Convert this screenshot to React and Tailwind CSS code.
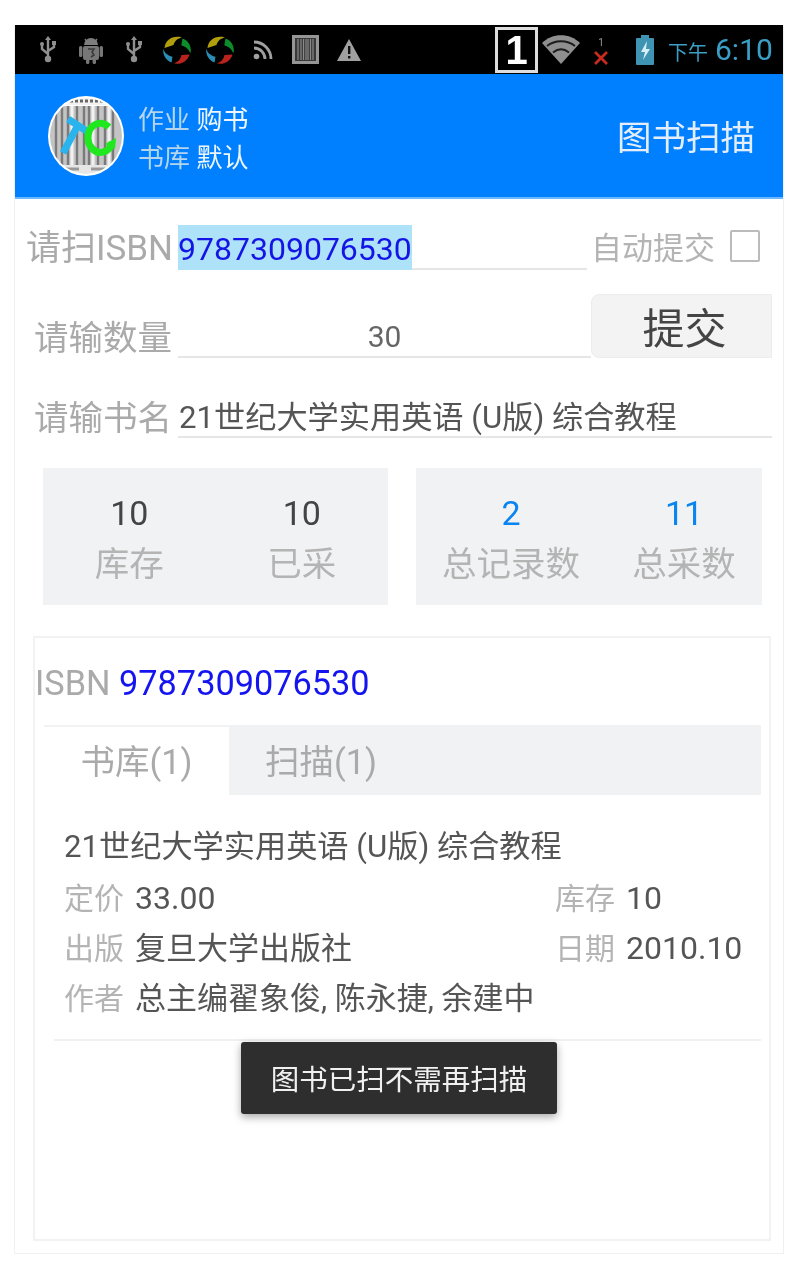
const FONT = "font-['Roboto','Noto_Sans_CJK_SC',sans-serif]";

function UsbIcon() {
  return (
    <svg width="18" height="27" viewBox="0 0 18 27" fill="none" stroke="#8f8f8f" strokeWidth="2.4">
      <path d="M9 3v19M9 18 3 13V9M9 15l6-4V8" />
      <path d="M9 0l3 4H6z" fill="#8f8f8f" stroke="none" />
      <circle cx="3" cy="8" r="2" fill="#8f8f8f" stroke="none" />
      <rect x="13" y="5" width="4" height="4" fill="#8f8f8f" stroke="none" />
      <circle cx="9" cy="23" r="3.2" fill="#8f8f8f" stroke="none" />
    </svg>
  );
}

function AndroidIcon() {
  return (
    <svg width="24" height="28" viewBox="0 0 24 28">
      <path d="M5 9a7 7 0 0 1 14 0z" fill="#7d7d7d" />
      <path d="M6 3 8 6M18 3l-2 3" stroke="#7d7d7d" strokeWidth="1.4" />
      <rect x="4" y="10" width="16" height="14" rx="2" fill="#777" />
      <rect x="0" y="10" width="3.4" height="11" rx="1.5" fill="#777" />
      <rect x="20.6" y="10" width="3.4" height="11" rx="1.5" fill="#777" />
      <rect x="7" y="23" width="3.4" height="5" rx="1.5" fill="#777" />
      <rect x="13.6" y="23" width="3.4" height="5" rx="1.5" fill="#777" />
      <path d="M9 13h6l-2 3 2 3-3 2" stroke="#3a3a3a" strokeWidth="1.6" fill="none" />
    </svg>
  );
}

function PinwheelIcon() {
  return (
    <svg width="28" height="28" viewBox="0 0 28 28">
      <path d="M1.5 12C2 5 8 0 16 .8c1 .1 2.4.4 3 .8-4 .8-7 3-8.5 7.400z" fill="#b09e0c" />
      <path d="M19.5 2.5C24.5 4 28 9 27.8 14.5c0 1-.2 2-.5 2.800-1.5-3.800-3.800-6.300-9-8z" fill="#0c8c2a" />
      <path d="M26.5 18.5C25 24 20 28 14 27.8c-1.200 0-2.300-.2-3.200-.5 3.800-1 6.500-3.200 7.700-8.300z" fill="#b8241d" />
      <path d="M8.5 26.5C3.5 24.5.2 20 .2 14.5c0-.6 0-1.200.1-1.700 1.300 4 3.700 6.500 9.200 8z" fill="#2a8db5" />
    </svg>
  );
}

function RssIcon() {
  return (
    <svg width="20" height="20" viewBox="0 0 20 20" fill="none" stroke="#a0a0a0" strokeWidth="2.8">
      <circle cx="3.5" cy="16.5" r="2.8" fill="#a0a0a0" stroke="none" />
      <path d="M1 8a11 11 0 0 1 11 11" />
      <path d="M1 2a17 17 0 0 1 17 17" />
    </svg>
  );
}

function BarcodeIcon() {
  return (
    <svg width="27" height="29" viewBox="0 0 27 29">
      <rect x="1.5" y="1.5" width="24" height="26" fill="#383838" stroke="#959595" strokeWidth="3" />
      <path d="M6 4v21M9 4v21M11.5 4v21M14 4v21M16 4v21M18.5 4v21M21 4v21" stroke="#8a8a8a" strokeWidth="1.2" />
    </svg>
  );
}

function WarnIcon() {
  return (
    <svg width="24" height="22" viewBox="0 0 24 22">
      <path d="M12 0 24 22H0z" fill="#a0a0a0" />
      <path d="M11 7h2.4v8H11zM11 17h2.4v2.6H11z" fill="#111" />
    </svg>
  );
}

function WifiIcon() {
  return (
    <svg width="38" height="29" viewBox="0 0 38 29">
      <path d="M19 29 0 8C10-2.5 28-2.5 38 8z" fill="#8f8f8f" />
      <path d="M5 11c8-6.5 20-6.5 28 0M11 17.5c5-4 11-4 16 0" stroke="#1c1c1c" strokeWidth="2" fill="none" />
    </svg>
  );
}

function SignalX() {
  return (
    <div className="flex flex-col items-center w-[16px] mt-[2px]">
      <span className="text-[#999] text-[10px] leading-[14px]">1</span>
      <svg width="16" height="16" viewBox="0 0 16 16" stroke="#c92a20" strokeWidth="2.8">
        <path d="M2 2l12 12M14 2 2 14" />
      </svg>
    </div>
  );
}

function BatteryIcon() {
  return (
    <svg width="18" height="30" viewBox="0 0 18 30">
      <rect x="5" y="0" width="8" height="3" fill="#3f93b3" />
      <rect x="0" y="3" width="18" height="27" rx="1" fill="#3f93b3" />
      <path d="M11 6 5 17h4l-2 8 7-11h-4z" fill="#d8eef6" />
    </svg>
  );
}

function Logo() {
  return (
    <svg width="78" height="82" viewBox="0 0 78 82" className="shrink-0">
      <defs>
        <clipPath id="logo-clip">
          <ellipse cx="39" cy="41" rx="36" ry="38" />
        </clipPath>
      </defs>
      <ellipse cx="39" cy="41" rx="38" ry="40" fill="#fff" />
      <g clipPath="url(#logo-clip)">
        <rect x="0" y="11" width="78" height="59" fill="#c4c4c4" />
        <path d="M9 11v59M15 11v59M21 11v59M30 11v59M37 11v59M42 11v59M51 11v59M58 11v59M66 11v59" stroke="#7a7a7a" strokeWidth="2.4" />
        <path d="M25 11v59M46 11v59M62 11v59" stroke="#f2f2f2" strokeWidth="3" />
        <rect x="0" y="0" width="78" height="10" fill="#f1f1f1" />
        <path d="M18 6h42" stroke="#666" strokeWidth="3" strokeDasharray="3 2" />
        <rect x="0" y="70" width="78" height="12" fill="#e6e6e6" />
        <path d="M18 74h14M44 74h14" stroke="#999" strokeWidth="3" />
      </g>
      <path d="M21 24 41 37M31 30 16 58" stroke="#29b4ee" strokeWidth="7" fill="none" />
      <path d="M62 32C53 24 42 30 41 41c-1 11 8 18 15 16 5-1 8-5 9-10" stroke="#1fe81f" strokeWidth="7" fill="none" />
      <path d="M58 49l11-6-1 11z" fill="#1fe81f" />
    </svg>
  );
}

function StatCell({ value, label, blue }) {
  return (
    <div className="flex-1 flex flex-col items-center">
      <span className={`text-[34px] leading-[44px] ${blue ? "text-[#0a84f0]" : "text-[#444]"}`}>{value}</span>
      <span className="text-[34.5px] leading-[58px] text-[#b4b4b4] whitespace-nowrap">{label}</span>
    </div>
  );
}

function InfoPair({ label, value, digits }) {
  return (
    <div className="flex items-center gap-[11px] whitespace-nowrap">
      <span className="text-[#b4b4b4] text-[30px]">{label}</span>
      <span className={`text-[#555] ${digits ? "text-[32px]" : "text-[31px]"}`}>{value}</span>
    </div>
  );
}

export default function App() {
  return (
    <div className={`${FONT} bg-white w-[800px] h-[1280px] pt-[25px] pl-[14px] overflow-hidden blur-[0.5px]`}>
      <div className="relative w-[770px] h-[1229px] border-x border-b border-[#f0f0f0]">
        {/* status bar */}
        <div className="h-[49px] bg-black flex items-center pl-[11px]">
          <div className="flex items-center">
            <div className="w-[43px] flex justify-center"><UsbIcon /></div>
            <div className="w-[43px] flex justify-center"><AndroidIcon /></div>
            <div className="w-[43px] flex justify-center"><UsbIcon /></div>
            <div className="w-[43px] flex justify-center"><PinwheelIcon /></div>
            <div className="w-[43px] flex justify-center"><PinwheelIcon /></div>
            <div className="w-[43px] flex justify-center"><RssIcon /></div>
            <div className="w-[43px] flex justify-center"><BarcodeIcon /></div>
            <div className="w-[43px] flex justify-center"><WarnIcon /></div>
          </div>
          <div className="ml-[125px] w-[43px] h-[46px] border-[3px] border-[#ddd] flex items-center justify-center text-white text-[40px] font-bold leading-none font-['Liberation_Sans',sans-serif]">1</div>
          <div className="ml-[4px]"><WifiIcon /></div>
          <div className="ml-[13px]"><SignalX /></div>
          <div className="ml-[27px]"><BatteryIcon /></div>
          <div className="ml-[14px] mt-[3px] flex items-baseline gap-[7px] text-[#3a9fc6]">
            <span className="text-[20px]">下午</span>
            <span className="text-[30px] leading-none">6:10</span>
          </div>
        </div>

        {/* header */}
        <div className="h-[125px] bg-[#0080ff] border-b-2 border-[#6cb8ff] flex items-center pl-[32px] pr-[28px]">
          <Logo />
          <div className="ml-[13px] flex flex-col text-[26px] leading-[38px] mt-[6px]">
            <span className="text-[#b5d4ee]">作业 <span className="text-[#eef6fd]">购书</span></span>
            <span className="text-[#b5d4ee]">书库 <span className="text-[#eef6fd]">默认</span></span>
          </div>
          <span className="ml-auto text-[34.5px] text-[#e3eefa] mt-[6px]">图书扫描</span>
        </div>

        {/* isbn row */}
        <div className="flex items-end h-[45px] mt-[26px] pl-[11px]">
          <span className="w-[152px] text-[#aaa] text-[35px] leading-[42px] whitespace-nowrap">请扫ISBN</span>
          <div className="w-[409px] h-[45px] border-b-2 border-[#e6e6e6]">
            <span className="inline-block h-[45px] w-[234px] bg-[#aee2f8] text-[#1414e6] text-[32px] leading-[49px]">9787309076530</span>
          </div>
          <span className="ml-[4px] text-[#b4b4b4] text-[31px] leading-[42px] whitespace-nowrap">自动提交</span>
          <div className="ml-[15px] mb-[8px] w-[30px] h-[32px] border-2 border-[#bbb] rounded-[2px]"></div>
        </div>

        {/* quantity row */}
        <div className="flex items-end h-[64px] mt-[24px] pl-[19px]">
          <span className="w-[144px] text-[#aaa] text-[34.5px] leading-[40px] whitespace-nowrap">请输数量</span>
          <div className="w-[413px] h-[44px] border-b-2 border-[#e6e6e6] text-center text-[#666] text-[30px] leading-[45px]">30</div>
          <button className="w-[181px] h-[64px] pt-[3px] pl-[6px] bg-[#f3f3f3] border border-[#ececec] rounded-l-[8px] text-[42px] text-[#444]">提交</button>
        </div>

        {/* title row */}
        <div className="flex items-end h-[44px] mt-[36px] pl-[19px]">
          <span className="w-[144px] text-[#aaa] text-[34.5px] leading-[40px] whitespace-nowrap">请输书名</span>
          <div className="w-[594px] h-[44px] border-b-2 border-[#e6e6e6] pl-[1px] text-[#555] text-[31.2px] leading-[47px] whitespace-nowrap">21世纪大学实用英语 (U版) 综合教程</div>
        </div>

        {/* stats */}
        <div className="flex gap-[28px] mt-[30px] pl-[28px]">
          <div className="w-[345px] h-[137px] bg-[#f1f2f3] flex pt-[23px]">
            <StatCell value="10" label="库存" />
            <StatCell value="10" label="已采" />
          </div>
          <div className="w-[346px] h-[137px] bg-[#f1f2f3] flex pt-[23px]">
            <div className="w-[190px] flex"><StatCell value="2" label="总记录数" blue /></div>
            <div className="flex-1 flex"><StatCell value="11" label="总采数" blue /></div>
          </div>
        </div>

        {/* result card */}
        <div className="mt-[31px] ml-[18px] w-[738px] h-[605px] border-2 border-[#f2f2f2]">
          <div className="h-[87px] pt-[20px] text-[34.3px] leading-[50px] whitespace-nowrap">
            <span className="text-[#aaa]">ISBN</span> <span className="text-[#1414f0]">9787309076530</span>
          </div>
          <div className="ml-[9px] w-[717px] h-[70px] flex bg-[#f1f2f3] border-t-2 border-[#f1f2f3]">
            <div className="w-[185px] pt-[3px] bg-white flex items-center justify-center text-[34.5px] text-[#aaa]">书库(1)</div>
            <div className="w-[184px] pt-[3px] flex items-center justify-center text-[34.5px] text-[#aaa]">扫描(1)</div>
          </div>
          <div className="ml-[29px] mt-[31px]">
            <div className="text-[#555] text-[31.2px] leading-[42px] whitespace-nowrap">21世纪大学实用英语 (U版) 综合教程</div>
            <div className="mt-[10px] grid grid-cols-[491px_1fr] gap-y-[9px] leading-[41px]">
              <InfoPair label="定价" value="33.00" digits />
              <InfoPair label="库存" value="10" digits />
              <InfoPair label="出版" value="复旦大学出版社" />
              <InfoPair label="日期" value="2010.10" digits />
              <InfoPair label="作者" value="总主编翟象俊, 陈永捷, 余建中" />
            </div>
          </div>
          <div className="ml-[19px] mt-[20px] w-[707px] border-t-2 border-[#f1f1f1]"></div>
        </div>

        {/* toast */}
        <div className="absolute left-[226px] top-[1017px] w-[316px] h-[72px] pt-[6px] bg-[#2e2e2e] rounded-[3px] shadow-[0_3px_8px_rgba(0,0,0,0.35)] flex items-center justify-center text-[28.5px] text-[#f0f0f0] whitespace-nowrap">图书已扫不需再扫描</div>
      </div>
    </div>
  );
}
